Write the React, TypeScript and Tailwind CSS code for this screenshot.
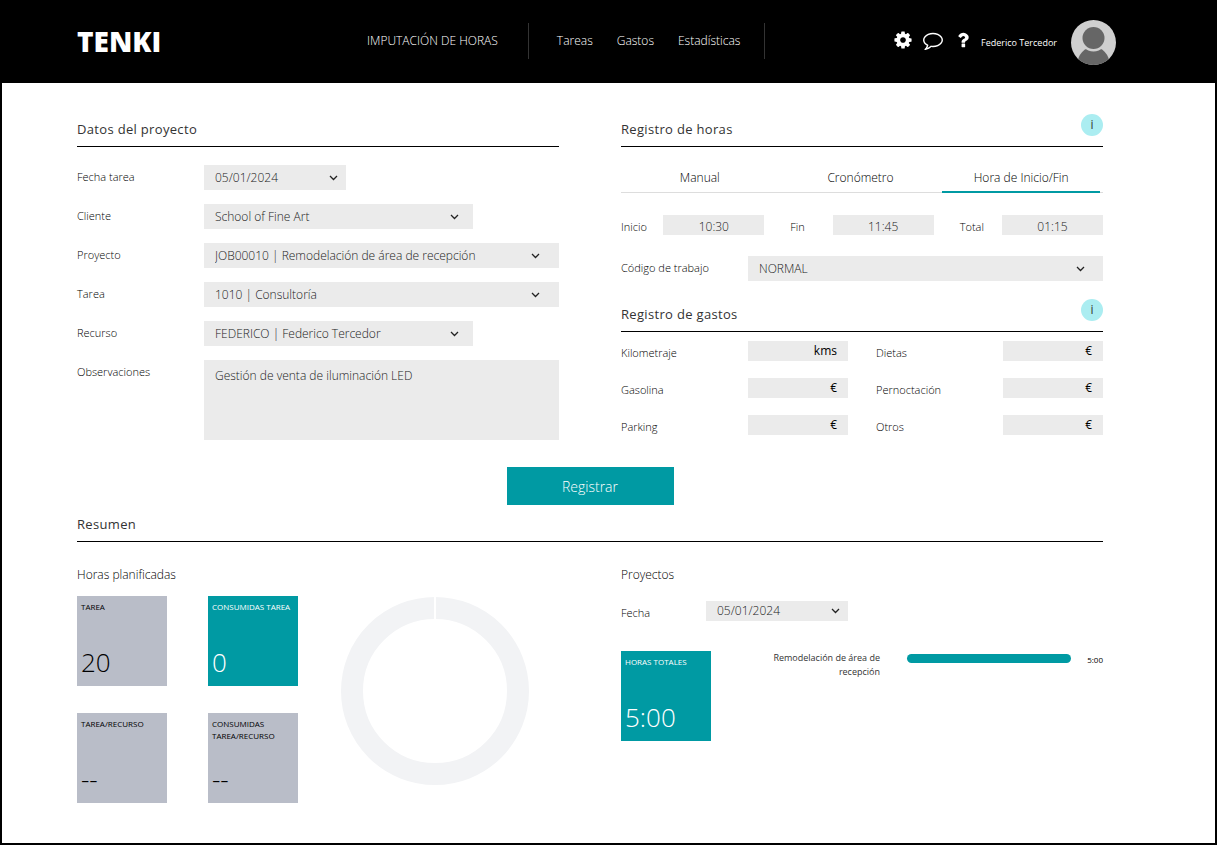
import React, { useState } from "react";
import clsx from "clsx";

const CHEVRON = "M1 1.5 4.5 5 8 1.5";

const COG_PATH =
  "M1152 896q0-106-75-181t-181-75-181 75-75 181 75 181 181 75 181-75 75-181zm512-109v222q0 12-8 23t-20 13l-185 28q-19 54-39 91 35 50 107 138 10 12 10 25t-9 23q-27 37-99 108t-94 71q-12 0-26-9l-138-108q-44 23-91 38-16 136-29 186-7 28-36 28h-222q-14 0-24.5-8.5t-11.5-21.5l-28-184q-49-16-90-37l-141 107q-10 9-25 9-14 0-25-11-126-114-165-168-7-10-7-23 0-12 8-23 15-21 51-66.5t54-70.5q-27-50-41-99l-183-27q-13-2-21-12.5t-8-23.5v-222q0-12 8-23t19-13l186-28q14-46 39-92-40-57-107-138-10-12-10-24 0-10 9-23 26-36 98.5-107.5t94.5-71.5q13 0 26 10l138 107q44-23 91-38 16-136 29-186 7-28 36-28h222q14 0 24.5 8.5t11.5 21.5l28 184q49 16 90 37l142-107q9-9 24-9 13 0 25 10 129 119 165 170 7 8 7 22 0 12-8 23-15 21-51 66.5t-54 70.5q26 50 41 98l183 28q13 2 21 12.5t8 23.5z";

const COMMENT_PATH =
  "M896 384q-204 0-381.5 69.5t-282 187.5-104.5 255q0 112 71.5 213.5t201.5 175.5l87 50-27 96q-24 91-70 172 152-63 275-171l43-38 57 6q69 8 130 8 204 0 381.5-69.5t282-187.5 104.5-255-104.5-255-282-187.5-381.5-69.5zm896 512q0 174-120 321.5t-326 233-450 85.5q-70 0-145-8-198 175-460 242-49 14-114 22h-5q-15 0-27-10.5t-16-27.5v-1q-3-4-.5-12t2-10 4.5-9.5l6-9 7-8.5 8-9q7-8 31-34.5t34.5-38 31-39.5 32.5-51 27-59 26-76q-157-89-247.5-220t-90.5-281q0-174 120-321.5t326-233 450-85.5 450 85.5 326 233 120 321.5z";

const HELP_PATH =
  "M1088 1256v240q0 16-12 28t-28 12h-240q-16 0-28-12t-12-28v-240q0-16 12-28t28-12h240q16 0 28 12t12 28zm316-600q0 54-15.5 101t-35 76.5-55 59.5-57.5 43.5-61 35.5q-41 23-68.5 65t-27.5 67q0 17-12 32.5t-28 15.5h-240q-15 0-25.5-18.5t-10.5-37.5v-45q0-83 65-156.5t143-108.5q59-27 84-56t25-76q0-42-46.5-74t-107.5-32q-65 0-108 29-35 25-107 115-13 16-31 16-12 0-25-8l-164-125q-13-10-15.5-25t5.5-28q160-266 464-266 80 0 161 31t146 83 106 127.5 41 158.5z";

function HeaderIcon({ path, label }: { path: string; label: string }) {
  return (
    <button type="button" aria-label={label} className="cursor-pointer">
      <svg viewBox="0 0 1792 1792" className="w-5 h-5 fill-white">
        <path d={path} />
      </svg>
    </button>
  );
}

function Avatar() {
  return (
    <svg viewBox="0 0 45 45" className="w-[45px] h-[45px]" aria-hidden="true">
      <clipPath id="avatar-clip">
        <circle cx="22.5" cy="22.5" r="22.5" />
      </clipPath>
      <g clipPath="url(#avatar-clip)">
        <rect width="45" height="45" fill="#cfcfcf" />
        <ellipse cx="22.5" cy="44" rx="16" ry="17" fill="#666" />
        <circle cx="22.5" cy="18" r="13.5" fill="#cfcfcf" />
        <circle cx="22.5" cy="18" r="11" fill="#666" />
      </g>
    </svg>
  );
}

interface SelectBoxProps {
  id: string;
  value: string;
  className?: string;
  chevronClass?: string;
}

function SelectBox({ id, value, className, chevronClass = "right-[18px]" }: SelectBoxProps) {
  return (
    <div className={clsx("relative", className)}>
      <select
        id={id}
        defaultValue={value}
        className="appearance-none block w-full h-full pl-[11px] pr-8 bg-[#ebebeb] text-[12px] leading-5 text-[#222] rounded-none outline-none"
      >
        <option value={value}>{value}</option>
      </select>
      <svg
        viewBox="0 0 9 7"
        className={clsx("absolute top-1/2 -translate-y-1/2 w-[9px] h-[7px] pointer-events-none", chevronClass)}
        fill="none"
        stroke="#222"
        strokeWidth="1.3"
      >
        <path d={CHEVRON} />
      </svg>
    </div>
  );
}

function SectionTitle({ title, info }: { title: string; info?: boolean }) {
  return (
    <div className="flex items-start justify-between h-[33px] border-b border-black">
      <h2 className="text-[13px] leading-5 pt-[5px] tracking-wide font-normal text-[#333]">{title}</h2>
      {info && (
        <button
          type="button"
          aria-label={`Información: ${title}`}
          className="w-[22px] h-[22px] rounded-full bg-[#abedf1] text-[12px] leading-[22px] font-normal text-[#333] cursor-pointer"
        >
          i
        </button>
      )}
    </div>
  );
}

const projectFields = [
  { id: "fecha-tarea", label: "Fecha tarea", value: "05/01/2024", width: "w-[142px]", chevron: "right-[8px]" },
  { id: "cliente", label: "Cliente", value: "School of Fine Art", width: "w-[269px]", chevron: "right-[14px]" },
  { id: "proyecto", label: "Proyecto", value: "JOB00010 | Remodelación de área de recepción", width: "flex-1", chevron: "right-[19px]" },
  { id: "tarea", label: "Tarea", value: "1010 | Consultoría", width: "flex-1", chevron: "right-[19px]" },
  { id: "recurso", label: "Recurso", value: "FEDERICO | Federico Tercedor", width: "w-[269px]", chevron: "right-[14px]" },
];

function ProjectData() {
  return (
    <section>
      <SectionTitle title="Datos del proyecto" />
      <div className="flex flex-col gap-[14px] mt-[18px]">
        {projectFields.map((f) => (
          <div key={f.id} className="flex h-[25px]">
            <label htmlFor={f.id} className="w-[127px] leading-6">
              {f.label}
            </label>
            <SelectBox id={f.id} value={f.value} className={f.width} chevronClass={f.chevron} />
          </div>
        ))}
        <div className="flex">
          <label htmlFor="observaciones" className="w-[127px] leading-6">
            Observaciones
          </label>
          <textarea
            id="observaciones"
            defaultValue="Gestión de venta de iluminación LED"
            className="flex-1 h-20 px-[11px] py-[6px] bg-[#ebebeb] text-[12px] leading-5 text-[#222] resize-none outline-none"
          />
        </div>
      </div>
    </section>
  );
}

const tabs = ["Manual", "Cronómetro", "Hora de Inicio/Fin"];

const times = [
  { id: "inicio", label: "Inicio", value: "10:30" },
  { id: "fin", label: "Fin", value: "11:45" },
  { id: "total", label: "Total", value: "01:15" },
];

function HoursLog() {
  const [active, setActive] = useState("Hora de Inicio/Fin");

  return (
    <section>
      <SectionTitle title="Registro de horas" info />
      <div role="tablist" className="grid grid-cols-3 mt-[18px] border-b border-[#ddd]">
        {tabs.map((tab) => (
          <button
            key={tab}
            type="button"
            role="tab"
            aria-selected={tab === active}
            onClick={() => setActive(tab)}
            className={clsx(
              "h-7 mr-[3px] -mb-px border-b-2 text-[12px] leading-6 cursor-pointer",
              tab === active ? "border-[#009aa3]" : "border-transparent"
            )}
          >
            {tab}
          </button>
        ))}
      </div>
      <div className="grid grid-cols-3 gap-[26px] mt-[22px]">
        {times.map((t) => (
          <div key={t.id} className="flex justify-between h-5">
            <label htmlFor={t.id} className="leading-6">
              {t.label}
            </label>
            <input
              id={t.id}
              type="text"
              defaultValue={t.value}
              className="w-[101px] h-5 pt-[2px] bg-[#ebebeb] text-[12px] text-center text-[#222] outline-none"
            />
          </div>
        ))}
      </div>
      <div className="flex h-[25px] mt-[21px]">
        <label htmlFor="codigo" className="w-[127px] leading-6">
          Código de trabajo
        </label>
        <SelectBox id="codigo" value="NORMAL" className="flex-1" />
      </div>
    </section>
  );
}

const expenses = [
  { id: "kilometraje", label: "Kilometraje", unit: "kms" },
  { id: "dietas", label: "Dietas", unit: "€" },
  { id: "gasolina", label: "Gasolina", unit: "€" },
  { id: "pernoctacion", label: "Pernoctación", unit: "€" },
  { id: "parking", label: "Parking", unit: "€" },
  { id: "otros", label: "Otros", unit: "€" },
];

function ExpensesLog() {
  return (
    <section className="mt-[18px]">
      <SectionTitle title="Registro de gastos" info />
      <div className="grid grid-cols-2 gap-x-7 gap-y-[17px] mt-[9px]">
        {expenses.map((e) => (
          <div key={e.id} className="flex justify-between h-5">
            <label htmlFor={e.id} className="leading-6">
              {e.label}
            </label>
            <div className="flex w-[100px] h-5 pr-[11px] bg-[#ebebeb]">
              <input id={e.id} type="text" className="flex-1 min-w-0 h-5 text-right outline-none" />
              <span className="text-[12px] leading-5 font-normal text-black">{e.unit}</span>
            </div>
          </div>
        ))}
      </div>
    </section>
  );
}

interface TileProps {
  label: string;
  value: string;
  highlight?: boolean;
}

function Tile({ label, value, highlight }: TileProps) {
  return (
    <div
      className={clsx(
        "flex flex-col justify-between w-[90px] h-[90px] px-1 pt-[5px] pb-2",
        highlight ? "bg-[#009aa3] text-white" : "bg-[#b9bdc8] text-black"
      )}
    >
      <span className="text-[8px] leading-3 font-normal whitespace-nowrap">
        {label.split("\n").map((line) => (
          <span key={line} className="block">
            {line}
          </span>
        ))}
      </span>
      <span className="text-[26px] leading-8">{value}</span>
    </div>
  );
}

function Donut() {
  return (
    <svg viewBox="0 0 188 188" className="w-[188px] h-[188px]" aria-hidden="true">
      <circle cx="94" cy="94" r="83" fill="none" stroke="#f2f3f5" strokeWidth="22" />
      <path d="M94 0V24" stroke="#fff" strokeWidth="2" />
    </svg>
  );
}

function Summary() {
  return (
    <section className="mt-1">
      <SectionTitle title="Resumen" />
      <div className="grid grid-cols-2 gap-[62px] mt-[23px]">
        <div>
          <h3 className="text-[12px] leading-5">Horas planificadas</h3>
          <div className="flex mt-[11px]">
            <div className="grid grid-cols-2 gap-x-[41px] gap-y-[27px]">
              <Tile label="TAREA" value="20" />
              <Tile label="CONSUMIDAS TAREA" value="0" highlight />
              <Tile label="TAREA/RECURSO" value="--" />
              <Tile label={"CONSUMIDAS\nTAREA/RECURSO"} value="--" />
            </div>
            <div className="ml-[43px] pt-px">
              <Donut />
            </div>
          </div>
        </div>
        <div>
          <h3 className="text-[12px] leading-5">Proyectos</h3>
          <div className="flex mt-4">
            <label htmlFor="fecha" className="w-[85px] leading-6">
              Fecha
            </label>
            <SelectBox id="fecha" value="05/01/2024" className="w-[142px] h-5" chevronClass="right-[8px]" />
          </div>
          <div className="flex items-start mt-[26px]">
            <Tile label="HORAS TOTALES" value="5:00" highlight />
            <p className="w-[120px] ml-[49px] text-[9px] leading-[14px] font-normal text-[#333] text-right">
              Remodelación de área de recepción
            </p>
            <div className="flex-1 h-[9px] mt-[3px] ml-[27px] rounded-full bg-[#009aa3]" />
            <span className="w-8 mt-[2px] text-[8px] leading-[14px] font-normal text-right text-black">5:00</span>
          </div>
        </div>
      </div>
    </section>
  );
}

function Header() {
  return (
    <header className="flex items-center justify-between h-[81px] pl-[75px] pr-[99px] bg-black text-white">
      <a href="#" className="w-[290px] pb-1 font-extrabold text-[28px] leading-8">
        TENKI
      </a>
      <nav className="flex items-center pb-1 text-[12px] leading-9">
        <a href="#imputacion" className="pr-[30px] border-r border-[#333]">
          IMPUTACIÓN DE HORAS
        </a>
        <div className="flex gap-6 pl-7 pr-6 border-r border-[#333]">
          <a href="#tareas">Tareas</a>
          <a href="#gastos">Gastos</a>
          <a href="#estadisticas">Estadísticas</a>
        </div>
      </nav>
      <div className="flex items-center ml-auto">
        <div className="flex items-center gap-[10px] pb-[6px]">
          <HeaderIcon path={COG_PATH} label="Configuración" />
          <HeaderIcon path={COMMENT_PATH} label="Mensajes" />
          <HeaderIcon path={HELP_PATH} label="Ayuda" />
        </div>
        <span className="ml-2 mr-[14px] text-[9px] font-normal">Federico Tercedor</span>
        <Avatar />
      </div>
    </header>
  );
}

export default function App() {
  return (
    <div className="min-h-screen border-2 border-black bg-white font-['Open_Sans','Noto_Sans',sans-serif] font-light text-[11px] text-black">
      <Header />
      <main className="pl-[75px] pr-[112px] pt-[31px] pb-10">
        <div className="grid grid-cols-2 gap-[62px]">
          <ProjectData />
          <div>
            <HoursLog />
            <ExpensesLog />
          </div>
        </div>
        <div className="flex justify-center mt-[27px]">
          <button type="button" className="w-[167px] h-[38px] bg-[#009aa3] text-white text-[14px] cursor-pointer">
            Registrar
          </button>
        </div>
        <Summary />
      </main>
    </div>
  );
}
